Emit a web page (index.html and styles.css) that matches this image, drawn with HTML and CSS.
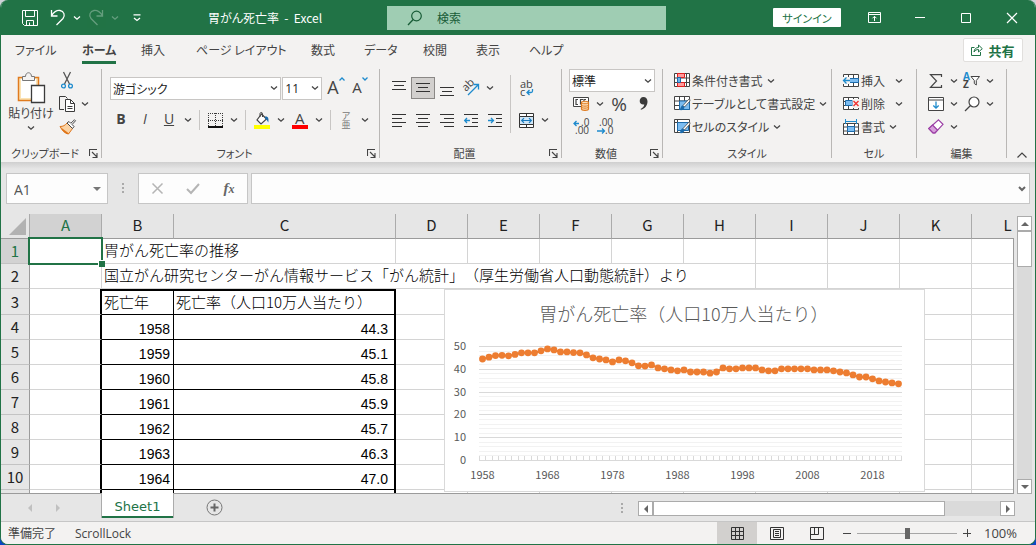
FILE: index.html
```html
<!DOCTYPE html>
<html lang="ja">
<head>
    <meta charset="UTF-8">
    <meta name="viewport" content="width=device-width, initial-scale=1.0">
    <title>胃がん死亡率 - Excel</title>
    <link rel="stylesheet" href="styles.css">
</head>
<body>
    <!-- shared icons -->
    <svg class="sprite" aria-hidden="true">
        <symbol id="chev" viewBox="0 0 8 6"><path d="M1 1.500l3 2.700 3-2.700" fill="none" stroke="currentColor" stroke-width="1.300"/></symbol>
        <symbol id="launch" viewBox="0 0 9 9"><path d="M.5 7V.5H8M3 3l4.500 4.500M8 4v4.500H3.500" fill="none" stroke="#444" stroke-width="1.100"/></symbol>
        <symbol id="tri-left" viewBox="0 0 8 8"><path d="M6 0v8L2 4z" fill="currentColor"/></symbol>
        <symbol id="tri-right" viewBox="0 0 8 8"><path d="M2 0v8l4-4z" fill="currentColor"/></symbol>
        <symbol id="tri-up" viewBox="0 0 8 8"><path d="M0 6h8L4 2z" fill="currentColor"/></symbol>
        <symbol id="tri-down" viewBox="0 0 8 8"><path d="M0 2h8L4 6z" fill="currentColor"/></symbol>
    </svg>

    <div class="window">
        <header class="titlebar">
            <div class="quick">
                <button class="tool" aria-label="上書き保存"><svg width="16" height="16" viewBox="0 0 16 16"><path d="M.5.5h15v15h-13l-2-2zM3.500.5v6h9v-6M4.500 15.500v-5h7v5M7.500 12.500v3" fill="none" stroke="#fff"/></svg></button>
                <button class="tool undo" aria-label="元に戻す"><svg width="16" height="17" viewBox="0 0 16 17"><path d="M1.500 1v6h6M1.500 6.500C4 3 7 1 10 1.500c4 .6 5.500 5 3 8L6.500 16" fill="none" stroke="#fff" stroke-width="1.300"/></svg></button>
                <button class="drop" aria-label="元に戻す一覧"><svg width="8" height="6"><use href="#chev"/></svg></button>
                <button class="tool faded" aria-label="やり直し"><svg width="16" height="17" viewBox="0 0 16 17"><path d="M14.500 1v6h-6M14.500 6.500C12 3 9 1 6 1.500 2 2.100.5 6.500 3 9.500L9.500 16" fill="none" stroke="#fff" stroke-width="1.300"/></svg></button>
                <button class="drop faded" aria-label="やり直し一覧"><svg width="8" height="6"><use href="#chev"/></svg></button>
                <button class="drop custom" aria-label="クイック アクセスのカスタマイズ"><svg width="8" height="8" viewBox="0 0 8 8"><path d="M.5.8h7M1 4l3 2.500L7 4" fill="none" stroke="#fff" stroke-width="1.300"/></svg></button>
                <span class="doc-name">胃がん死亡率&nbsp; -&nbsp; Excel</span>
            </div>
            <label class="search">
                <svg width="16" height="16" viewBox="0 0 16 16"><circle cx="9.500" cy="6" r="4.800" fill="none" stroke="#185c37" stroke-width="1.200"/><path d="M6.200 9.500L1 15" stroke="#185c37" stroke-width="1.300"/></svg>
                <input type="search" placeholder="検索" aria-label="検索">
            </label>
            <div class="win-buttons">
                <button class="signin">サインイン</button>
                <button class="win" aria-label="リボンの表示オプション"><svg width="13" height="11" viewBox="0 0 13 11"><path d="M.5.5h12v10H.5zM.5 2.500h12M6.500 9V4.500M4.500 6.300l2-2 2 2" fill="none" stroke="#fff"/></svg></button>
                <button class="win" aria-label="最小化"><svg width="10" height="10"><path d="M0 4.500h10" stroke="#fff"/></svg></button>
                <button class="win" aria-label="最大化"><svg width="10" height="10"><path d="M.5.5h9v9h-9z" fill="none" stroke="#fff"/></svg></button>
                <button class="win" aria-label="閉じる"><svg width="10" height="10"><path d="M0 0l10 10M10 0L0 10" stroke="#fff" stroke-width="1.200"/></svg></button>
            </div>
        </header>

        <nav class="tabs">
            <a href="#">ファイル</a>
            <a href="#" class="active">ホーム</a>
            <a href="#">挿入</a>
            <a href="#">ページ レイアウト</a>
            <a href="#">数式</a>
            <a href="#">データ</a>
            <a href="#">校閲</a>
            <a href="#">表示</a>
            <a href="#">ヘルプ</a>
            <button class="share"><svg width="12" height="12" viewBox="0 0 12 12"><path d="M3.500 3.500h-3v8h9V8M3 8c.3-3 2-4.500 4.500-4.500V1L11.300 4.700 7.500 8V5.500C5.500 5.500 4 6.300 3 8z" fill="none" stroke="#217346"/></svg>共有</button>
        </nav>

        <section class="ribbon">
            <div class="group clipboard">
                <div class="body">
                    <button class="paste">
                        <svg width="28" height="32" viewBox="0 0 28 32"><path d="M1.500 5.500h20v23h-20z" fill="#fbe3b5" stroke="#e07b1f" stroke-width="1.500"/><path d="M4 7h15v19H4z" fill="#fff"/><path d="M5.500 8.500v-4h3C8.500-.5 14.500-.5 14.500 4.500h3v4z" fill="#f3f2f1" stroke="#777"/><path d="M14.500 13.500h13v17h-13z" fill="#fff" stroke="#3b3b3b" stroke-width="1.300"/></svg>
                        <span>貼り付け</span>
                        <svg width="8" height="6"><use href="#chev"/></svg>
                    </button>
                    <div class="stack">
                        <div class="row"><button class="tool" aria-label="切り取り"><svg width="12" height="17" viewBox="0 0 12 17"><path d="M2.500 0l6 12M9.500 0l-6 12" fill="none" stroke="#555" stroke-width="1.300"/><circle cx="2.500" cy="14" r="1.900" fill="none" stroke="#1e8bcd" stroke-width="1.300"/><circle cx="9.500" cy="14" r="1.900" fill="none" stroke="#1e8bcd" stroke-width="1.300"/></svg></button></div>
                        <div class="row"><button class="tool" aria-label="コピー"><svg width="16" height="16" viewBox="0 0 16 16"><path d="M5 13.500H.5V.5h6l2 2" fill="none" stroke="#3b3b3b"/><path d="M6.500 3.500h5l4 4v8h-9z" fill="#fff" stroke="#3b3b3b"/><path d="M11.500 3.500v4h4M8.500 10.500h5M8.500 12.500h5" fill="none" stroke="#3b3b3b"/></svg></button><button class="drop" aria-label="コピーの種類"><svg width="8" height="6"><use href="#chev"/></svg></button></div>
                        <div class="row"><button class="tool" aria-label="書式のコピー"><svg width="17" height="16" viewBox="0 0 17 16"><path d="M8 4l5.500 5.500-4 5.500C6 14 3 11.500 1 7.500c3 0 5-1 7-3.500z" fill="#fbd3a4" stroke="#e0761a"/><path d="M2 8.500l8 6-1 .8C5 14.500 3 11.500 2 8.500z" fill="#e0761a"/><path d="M8 4l2-1.500 1.800 1.800L15.500.8l1 1-3.400 3.700 1.900 2-1.500 2z" fill="#fff" stroke="#444"/></svg></button></div>
                    </div>
                </div>
                <div class="caption"><span>クリップボード</span><button aria-label="クリップボードの詳細"><svg width="9" height="9"><use href="#launch"/></svg></button></div>
            </div>

            <div class="group font">
                <div class="body lines">
                    <div class="row">
                        <span class="combo family"><select aria-label="フォント"><option>游ゴシック</option></select><svg width="8" height="6"><use href="#chev"/></svg></span>
                        <span class="combo size"><select aria-label="フォント サイズ"><option>11</option></select><svg width="8" height="6"><use href="#chev"/></svg></span>
                        <button class="tool grow" aria-label="フォント サイズの拡大"><span>A</span><svg width="6" height="4" viewBox="0 0 6 4"><path d="M.5 3.500L3 1l2.500 2.500" fill="none" stroke="#1e8bcd" stroke-width="1.300"/></svg></button>
                        <button class="tool shrink" aria-label="フォント サイズの縮小"><span>A</span><svg width="6" height="4" viewBox="0 0 6 4"><path d="M.5.5L3 3 5.500.5" fill="none" stroke="#1e8bcd" stroke-width="1.300"/></svg></button>
                    </div>
                    <div class="row">
                        <button class="tool letter"><b>B</b></button>
                        <button class="tool letter"><i>I</i></button>
                        <button class="tool letter"><u>U</u></button>
                        <button class="drop" aria-label="下線の種類"><svg width="8" height="6"><use href="#chev"/></svg></button>
                        <span class="sep"></span>
                        <button class="tool" aria-label="罫線"><svg width="15" height="15" viewBox="0 0 15 15"><path d="M.5 0v13M14.500 0v13M7.500 0v13M0 .5h15M0 7.500h15" stroke="#3b3b3b" stroke-dasharray="1 1"/><path d="M0 14h15" stroke="#111" stroke-width="2"/></svg></button>
                        <button class="drop" aria-label="罫線の種類"><svg width="8" height="6"><use href="#chev"/></svg></button>
                        <span class="sep"></span>
                        <button class="tool" aria-label="塗りつぶしの色"><svg width="16" height="17" viewBox="0 0 16 17"><path d="M7.500 2L3 8l4 4 5.500-5z" fill="#fff" stroke="#444" stroke-width="1.200"/><path d="M6 5V1.500C6 .2 8.500.2 8.500 1.500V5" fill="none" stroke="#444"/><path d="M11 4.500c3-.5 4 1.500 3.300 6-1-1-1-3-3.300-4z" fill="#1c6bab"/><path d="M0 13h16v4H0z" fill="#ff0"/></svg></button>
                        <button class="drop" aria-label="塗りつぶしの色の一覧"><svg width="8" height="6"><use href="#chev"/></svg></button>
                        <button class="tool color" aria-label="フォントの色"><span>A</span></button>
                        <button class="drop" aria-label="フォントの色の一覧"><svg width="8" height="6"><use href="#chev"/></svg></button>
                        <span class="sep"></span>
                        <button class="tool ruby" aria-label="ふりがな"><span>ア</span><span>亜</span></button>
                        <button class="drop" aria-label="ふりがなの設定"><svg width="8" height="6"><use href="#chev"/></svg></button>
                    </div>
                </div>
                <div class="caption"><span>フォント</span><button aria-label="フォントの詳細"><svg width="9" height="9"><use href="#launch"/></svg></button></div>
            </div>

            <div class="group align">
                <div class="body">
                    <div class="lines">
                        <div class="row">
                            <button class="tool" aria-label="上揃え"><svg width="14" height="14"><path d="M0 .5h14M2 4.500h10M0 8.500h14" stroke="#333"/></svg></button>
                            <button class="tool pressed" aria-label="上下中央揃え"><svg width="14" height="10"><path d="M0 .5h14M2 4.500h10M0 8.500h14" stroke="#333"/></svg></button>
                            <button class="tool" aria-label="下揃え"><svg width="14" height="14"><path d="M0 6.500h14M2 10.500h10M0 14.500h14" stroke="#333"/></svg></button>
                            <button class="tool" aria-label="方向"><svg width="17" height="16" viewBox="0 0 17 16"><text x="0" y="9" transform="rotate(-45 5 7)" font-size="11" fill="#444">ab</text><path d="M5 15L15 5M10.500 4.500h5v5" fill="none" stroke="#1e8bcd" stroke-width="1.300"/></svg></button>
                            <button class="drop" aria-label="方向の一覧"><svg width="8" height="6"><use href="#chev"/></svg></button>
                        </div>
                        <div class="row">
                            <button class="tool" aria-label="左揃え"><svg width="14" height="13"><path d="M0 .5h14M0 4.500h10M0 8.500h14M0 12.500h10" stroke="#333"/></svg></button>
                            <button class="tool" aria-label="中央揃え"><svg width="14" height="13"><path d="M0 .5h14M2 4.500h10M0 8.500h14M2 12.500h10" stroke="#333"/></svg></button>
                            <button class="tool" aria-label="右揃え"><svg width="14" height="13"><path d="M0 .5h14M4 4.500h10M0 8.500h14M4 12.500h10" stroke="#333"/></svg></button>
                            <button class="tool" aria-label="インデントを減らす"><svg width="14" height="13"><path d="M0 .5h14M8 4.500h6M8 8.500h6M0 12.500h14" stroke="#333"/><path d="M6 6.500H1M3 4L.7 6.500 3 9" fill="none" stroke="#1e8bcd" stroke-width="1.300"/></svg></button>
                            <button class="tool" aria-label="インデントを増やす"><svg width="14" height="13"><path d="M0 .5h14M8 4.500h6M8 8.500h6M0 12.500h14" stroke="#333"/><path d="M0 6.500h5M3 4l2.500 2.500L3 9" fill="none" stroke="#1e8bcd" stroke-width="1.300"/></svg></button>
                        </div>
                    </div>
                    <span class="sep tall"></span>
                    <div class="lines">
                        <div class="row">
                            <button class="tool" aria-label="折り返して全体を表示する"><svg width="15" height="17" viewBox="0 0 15 17"><text x="1" y="8" font-size="11" fill="#444">ab</text><text x="1" y="16" font-size="11" fill="#444">c</text><path d="M13.500 9v2c0 1-.7 1.500-1.500 1.500H8M10.500 10L8 12.500l2.500 2.500" fill="none" stroke="#1e8bcd" stroke-width="1.300"/></svg></button>
                        </div>
                        <div class="row">
                            <button class="tool" aria-label="セルを結合して中央揃え"><svg width="15" height="15" viewBox="0 0 15 15"><path d="M.5.5h14v14H.5zM7.500.5v3M7.500 11.500v3" fill="#fff" stroke="#333"/><path d="M.5 3.500h14v8H.5z" fill="#cfe6f7" stroke="#333"/><path d="M2.500 7.500h10M5 5.200L2.700 7.500 5 9.800M10 5.200l2.300 2.300L10 9.800" fill="none" stroke="#1779bd" stroke-width="1.200"/></svg></button>
                            <button class="drop" aria-label="結合の一覧"><svg width="8" height="6"><use href="#chev"/></svg></button>
                        </div>
                    </div>
                </div>
                <div class="caption"><span>配置</span><button aria-label="配置の詳細"><svg width="9" height="9"><use href="#launch"/></svg></button></div>
            </div>

            <div class="group number">
                <div class="body stack">
                    <div class="row"><span class="combo format"><select aria-label="表示形式"><option>標準</option></select><svg width="8" height="6"><use href="#chev"/></svg></span></div>
                    <div class="row">
                        <button class="tool" aria-label="通貨表示形式"><svg width="17" height="15" viewBox="0 0 17 15"><path d="M.5 1.500h15v9H.5z" fill="#fff" stroke="#444"/><path d="M5 3.500H3v5h2M10 3.500H7.500v5M13 3.500h-2v3" fill="none" stroke="#444" stroke-width="1.200"/><path d="M8.500 6.500c0-1.700 7-1.700 7 0v6.500c0 1.700-7 1.700-7 0z" fill="#fde0bd" stroke="#e07b1f" stroke-width="1.200"/><path d="M8.500 6.500c0 1.700 7 1.700 7 0M8.500 9c0 1.500 7 1.500 7 0M8.500 11c0 1.500 7 1.500 7 0" fill="none" stroke="#e07b1f"/></svg></button>
                        <button class="drop" aria-label="通貨の一覧"><svg width="8" height="6"><use href="#chev"/></svg></button>
                        <button class="tool percent">%</button>
                        <button class="tool" aria-label="桁区切り"><svg width="9" height="13" viewBox="0 0 9 13"><path d="M4.300 0C7 0 8.500 2 8.500 4.500c0 4-2.500 7-6.500 8.300l-.4-.8c2.300-1.200 3.500-2.700 3.700-4.500C2.500 8 .7 6.400.7 4 .7 1.700 2.200 0 4.300 0z" fill="#3b3b3b"/></svg></button>
                    </div>
                    <div class="row">
                        <button class="tool" aria-label="小数点以下の表示桁数を増やす"><svg width="16" height="16" viewBox="0 0 16 16"><text x="8" y="7" font-size="10" fill="#444">.0</text><text x="2" y="15" font-size="10" fill="#444">.00</text><path d="M6 4.500H1M3.500 2L1 4.500 3.500 7" fill="none" stroke="#1e8bcd" stroke-width="1.300"/></svg></button>
                        <button class="tool" aria-label="小数点以下の表示桁数を減らす"><svg width="16" height="16" viewBox="0 0 16 16"><text x="2" y="7" font-size="10" fill="#444">.00</text><text x="8" y="15" font-size="10" fill="#444">.0</text><path d="M0 12h7M5 9.500L7.500 12 5 14.500" fill="none" stroke="#1e8bcd" stroke-width="1.300"/></svg></button>
                    </div>
                </div>
                <div class="caption"><span>数値</span><button aria-label="数値の詳細"><svg width="9" height="9"><use href="#launch"/></svg></button></div>
            </div>

            <div class="group style">
                <div class="body stack">
                    <button class="command"><svg width="16" height="15" viewBox="0 0 16 15"><path d="M.5.5h15v13H.5zM.5 5h15M.5 9.500h15M3.500.5v13M12.500.5v13" fill="#fff" stroke="#444"/><path d="M3.500.5h7v4h-7zM3.500 9.500h7v4h-7z" fill="#ff9a9a" stroke="#e02020"/><path d="M3.500 4.500h3v5h-3z" fill="#6bb5ee" stroke="#1c6bab"/></svg>条件付き書式<svg width="8" height="6"><use href="#chev"/></svg></button>
                    <button class="command"><svg width="16" height="15" viewBox="0 0 16 15"><path d="M.5.5h15v13H.5zM.5 5h15M.5 9.500h15M5.500.5v13M10.500.5v13" fill="#fff" stroke="#444"/><path d="M5.500 5h10v8.500h-10z" fill="#7cbcf0" stroke="#1c6bab"/><path d="M15.500 2.500L9 9.500l1.500 1.500L16 5z" fill="#fff" stroke="#444" stroke-width=".8"/><path d="M9 9.500c-2 0-2 2-3.500 4.500 3 .5 5-.5 5-3z" fill="#1c6bab"/></svg>テーブルとして書式設定<svg width="8" height="6"><use href="#chev"/></svg></button>
                    <button class="command"><svg width="16" height="15" viewBox="0 0 16 15"><path d="M.5.5h15v13H.5zM.5 3.500h15M3.500.5v13" fill="#fff" stroke="#444"/><path d="M3.500 3.500h11v8h-11z" fill="#7cbcf0" stroke="#1c6bab"/><path d="M15.500 2.500L9 9.500l1.500 1.500L16 5z" fill="#fff" stroke="#444" stroke-width=".8"/><path d="M9 9.500c-2 0-2 2-3.500 4.500 3 .5 5-.5 5-3z" fill="#1c6bab"/></svg>セルのスタイル<svg width="8" height="6"><use href="#chev"/></svg></button>
                </div>
                <div class="caption"><span>スタイル</span></div>
            </div>

            <div class="group cells">
                <div class="body stack">
                    <button class="command wide"><svg width="16" height="14" viewBox="0 0 16 14"><path d="M.5.5h15v12H.5zM5.500.5v12M10.500.5v12M.5 4.500h15M.5 8.500h15" fill="#fff" stroke="#444"/><path d="M6 4.500h9.500v4H6z" fill="#7cbcf0" stroke="#1c6bab"/><path d="M0 3h7v7H0z" fill="#f3f2f1"/><path d="M7 6.500H1M3.500 3.500l-3 3 3 3" fill="none" stroke="#1e8bcd" stroke-width="1.300"/></svg>挿入<svg width="8" height="6"><use href="#chev"/></svg></button>
                    <button class="command wide"><svg width="16" height="14" viewBox="0 0 16 14"><path d="M.5.5h15v12H.5zM5.500.5v12M10.500.5v12M.5 4.500h15M.5 8.500h15" fill="#fff" stroke="#444"/><path d="M2.500 3.500h7v5h-7z" fill="#7cbcf0" stroke="#1c6bab"/><path d="M9.500 2H16v9H9.500z" fill="#f3f2f1"/><path d="M10.500 4l5 5M15.500 4l-5 5" stroke="#e33" stroke-width="1.400"/></svg>削除<svg width="8" height="6"><use href="#chev"/></svg></button>
                    <button class="command"><svg width="16" height="16" viewBox="0 0 16 16"><path d="M.5 4.500h15v11H.5zM4.500 4.500v11M11.500 4.500v11M.5 8h15M.5 12h15" fill="#fff" stroke="#444"/><path d="M4.500 7.500h7v5h-7z" fill="#7cbcf0" stroke="#1c6bab"/><path d="M2.500 0v5M13.500 0v5M3 2.500h10" stroke="#1e8bcd"/></svg>書式<svg width="8" height="6"><use href="#chev"/></svg></button>
                </div>
                <div class="caption"><span>セル</span></div>
            </div>

            <div class="group edit">
                <div class="body stack">
                    <div class="row">
                        <button class="tool" aria-label="合計"><svg width="14" height="14" viewBox="0 0 14 14"><path d="M12.500 3V.7H1.500L7.500 7l-6 6.300h11V11" fill="none" stroke="#444" stroke-width="1.200"/></svg></button>
                        <button class="drop" aria-label="合計の一覧"><svg width="8" height="6"><use href="#chev"/></svg></button>
                        <button class="tool" aria-label="並べ替えとフィルター"><svg width="18" height="17" viewBox="0 0 18 17"><text x="0" y="8" font-size="10" font-weight="bold" fill="#1e8bcd">A</text><text x="0" y="16" font-size="10" font-weight="bold" fill="#444">Z</text><path d="M8 4.500h8.500l-3.200 4v4.500l-2-1.500V8.500z" fill="#fff" stroke="#444"/></svg></button>
                        <button class="drop" aria-label="フィルターの一覧"><svg width="8" height="6"><use href="#chev"/></svg></button>
                    </div>
                    <div class="row">
                        <button class="tool" aria-label="フィル"><svg width="16" height="14" viewBox="0 0 16 14"><path d="M.5.5h15v13H.5zM.5 3h15" fill="#fff" stroke="#444"/><path d="M8 4.500V11M5.300 8.500L8 11.200l2.700-2.700" fill="none" stroke="#1e8bcd" stroke-width="1.300"/></svg></button>
                        <button class="drop" aria-label="フィルの一覧"><svg width="8" height="6"><use href="#chev"/></svg></button>
                        <button class="tool" aria-label="検索と選択"><svg width="16" height="16" viewBox="0 0 16 16"><circle cx="10" cy="6" r="5" fill="#fff" stroke="#444" stroke-width="1.200"/><path d="M6.500 9.500L1 15" stroke="#444" stroke-width="1.300"/></svg></button>
                        <button class="drop" aria-label="検索の一覧"><svg width="8" height="6"><use href="#chev"/></svg></button>
                    </div>
                    <div class="row">
                        <button class="tool" aria-label="クリア"><svg width="16" height="15" viewBox="0 0 16 15"><path d="M10.500.8l4.500 4.500-8 8.500H5L.8 9.500z" fill="#fff" stroke="#9b3fa5" stroke-width="1.200"/><path d="M4.500 6L9.500 11 7 13.800H5L.8 9.500z" fill="#d79fdc" stroke="#9b3fa5" stroke-width="1.200"/></svg></button>
                        <button class="drop" aria-label="クリアの一覧"><svg width="8" height="6"><use href="#chev"/></svg></button>
                    </div>
                </div>
                <div class="caption"><span>編集</span></div>
            </div>
            <button class="collapse" aria-label="リボンを折りたたむ"><svg width="10" height="6"><path d="M.5 5.500L5 1l4.500 4.500" fill="none" stroke="#444" stroke-width="1.200"/></svg></button>
        </section>

        <div class="formula-bar">
            <div class="box name-box"><input type="text" value="A1" aria-label="名前ボックス"><svg width="8" height="8"><use href="#tri-down"/></svg></div>
            <span class="dots"></span>
            <div class="box fx-box">
                <button aria-label="キャンセル"><svg width="11" height="11"><path d="M.5.5l10 10M10.500.5l-10 10" stroke="#b5b5b5" stroke-width="1.500"/></svg></button>
                <button aria-label="入力"><svg width="14" height="11"><path d="M1 6l4 4 8-9" fill="none" stroke="#b5b5b5" stroke-width="2"/></svg></button>
                <button class="fx"><i>f<small>x</small></i></button>
            </div>
            <div class="box formula"><input type="text" aria-label="数式バー"><svg width="8" height="6" viewBox="0 0 8 6"><path d="M1 1l3 3 3-3" fill="none" stroke="#666" stroke-width="2"/></svg></div>
        </div>

        <main class="sheet">
            <div class="grid" id="grid">
                <table>
                    <colgroup id="cols"></colgroup>
                    <thead><tr id="letters"></tr></thead>
                    <tbody id="rows"></tbody>
                </table>
                <svg class="chart" id="chart" width="481" height="203" role="img" aria-label="胃がん死亡率（人口10万人当たり）"></svg>
            </div>
            <div class="vscroll">
                <button aria-label="上へ"><svg width="8" height="8"><use href="#tri-up"/></svg></button>
                <span class="thumb"></span>
                <button aria-label="下へ"><svg width="8" height="8"><use href="#tri-down"/></svg></button>
            </div>
        </main>

        <div class="sheet-bar">
            <div class="sheet-nav">
                <button aria-label="前のシート"><svg width="8" height="8"><use href="#tri-left"/></svg></button>
                <button aria-label="次のシート"><svg width="8" height="8"><use href="#tri-right"/></svg></button>
            </div>
            <button class="sheet-tab">Sheet1</button>
            <button class="add" aria-label="新しいシート"><svg width="17" height="17"><circle cx="8.500" cy="8.500" r="7.500" fill="none" stroke="#777"/><path d="M8.500 4.500v8M4.500 8.500h8" stroke="#666" stroke-width="2"/></svg></button>
            <span class="dots"></span>
            <div class="hscroll">
                <button aria-label="左へ"><svg width="8" height="8"><use href="#tri-left"/></svg></button>
                <span class="thumb"></span>
                <button aria-label="右へ"><svg width="8" height="8"><use href="#tri-right"/></svg></button>
            </div>
        </div>

        <footer class="status">
            <span>準備完了</span>
            <span>ScrollLock</span>
            <div class="views">
                <button class="on" aria-label="標準"><svg width="13" height="13"><path d="M.5.5h12v12H.5zM4.500.5v12M8.500.5v12M.5 4.500h12M.5 8.500h12" fill="none" stroke="#333"/></svg></button>
                <button aria-label="ページ レイアウト"><svg width="14" height="13"><path d="M.5.5h13v12H.5zM3.500 2.500h7v8h-7zM5 4.500h4M5 6.500h4M5 8.500h4" fill="none" stroke="#333"/></svg></button>
                <button aria-label="改ページ プレビュー"><svg width="14" height="13"><path d="M.5.5h13v12H.5zM4.500.5v7M8.500.5v7M.5 7.500h8" fill="none" stroke="#333"/></svg></button>
            </div>
            <button class="zoom-step" aria-label="縮小"><svg width="8" height="8"><path d="M0 4.500h8" stroke="#444"/></svg></button>
            <input type="range" min="0" max="100" value="50" aria-label="ズーム">
            <button class="zoom-step" aria-label="拡大"><svg width="8" height="8"><path d="M0 4.500h8M4.500 0v8" stroke="#444"/></svg></button>
            <span class="zoom">100%</span>
        </footer>
    </div>
    <script src="script.js"></script>
</body>
</html>
```
FILE: styles.css
```css
* {
    box-sizing: border-box;
}
body {
    margin: 0;
    font-family: "Noto Sans CJK JP", sans-serif;
    font-size: 13px;
    color: #444;
    background: linear-gradient(#cfd3d8 50%, #0b46c4 50%);
}
button, input, select {
    font: inherit;
    color: inherit;
    border: 0;
    margin: 0;
    padding: 0;
    background: none;
    min-width: 0;
}
button {
    display: flex;
    align-items: center;
    justify-content: center;
    flex-shrink: 0;
}
svg {
    flex-shrink: 0;
    overflow: visible;
}
.sprite {
    display: none;
}
.window {
    display: flex;
    flex-direction: column;
    height: 100vh;
    border: 1px solid #217346;
    border-top: 0;
    border-radius: 8px;
    overflow: hidden;
    background: #e6e6e6;
    font-feature-settings: "palt";
}

/* title bar */
.titlebar {
    display: grid;
    grid-template-columns: 386px minmax(120px, 279px) 1fr;
    align-items: center;
    flex-shrink: 0;
    height: 35px;
    background: #217346;
    color: #fff;
}
.quick {
    display: flex;
    align-items: center;
    padding-left: 17px;
    font-size: 12px;
}
.undo {
    margin-left: 4px;
}
.faded {
    opacity: 0.3;
}
.custom {
    margin-left: 8px;
}
.doc-name {
    margin-left: 64px;
    white-space: nowrap;
}
.search {
    display: flex;
    align-items: center;
    gap: 14px;
    height: 24px;
    padding-left: 20px;
    background: #9fcdb3;
    font-size: 12px;
}
.search input {
    flex: 1;
    outline: none;
}
.search input::placeholder {
    color: #185c37;
    opacity: 1;
}
.win-buttons {
    display: flex;
    align-items: center;
    justify-content: flex-end;
}
.signin {
    width: 68px;
    height: 19px;
    margin-right: 10px;
    background: #fff;
    color: #217346;
    border-radius: 1px;
    font-size: 11px;
}
.win {
    width: 46px;
    height: 35px;
}

/* ribbon tabs */
.tabs {
    display: grid;
    grid-template-columns: 67px 59px 55px 115px 53px 59px 53px 53px 1fr auto;
    align-items: center;
    flex-shrink: 0;
    height: 30px;
    padding: 0 12px 0 14px;
    background: #f3f2f1;
}
.tabs a {
    justify-self: start;
    line-height: 22px;
    margin-top: 2px;
    border-bottom: 3px solid transparent;
    color: #444;
    text-decoration: none;
    white-space: nowrap;
    font-size: 12px;
}
.tabs .active {
    font-weight: bold;
    border-color: #217346;
}
.share {
    gap: 5px;
    width: 60px;
    height: 24px;
    background: #fff;
    border: 1px solid #e1dfdd;
    border-radius: 2px;
    color: #217346;
    font-weight: bold;
}

/* ribbon */
.ribbon {
    display: flex;
    flex-shrink: 0;
    height: 97px;
    padding-top: 4px;
    background: #f3f2f1;
}
.group {
    display: flex;
    flex-direction: column;
    flex-shrink: 0;
    height: 89px;
    border-right: 1px solid #b9b7b5;
}
.clipboard {
    width: 101px;
}
.font {
    width: 278px;
}
.align {
    width: 182px;
}
.number {
    width: 101px;
}
.style {
    width: 169px;
}
.cells {
    width: 85px;
}
.edit {
    width: 90px;
}
.body {
    display: flex;
    flex-shrink: 0;
    height: 76px;
    padding: 0 7px;
}
.row {
    display: flex;
    align-items: center;
}
.stack {
    display: flex;
    flex-direction: column;
}
.stack .row, .command {
    height: 23px;
}
.lines {
    display: flex;
    flex-direction: column;
    padding-top: 3px;
}
.body.lines {
    padding-top: 3px;
}
.lines .row {
    height: 32px;
}
.tool {
    width: 24px;
    height: 22px;
}
.drop {
    width: 14px;
    height: 22px;
}
.sep {
    width: 1px;
    height: 20px;
    margin: 0 4px;
    background: #c8c6c4;
}
.sep.tall {
    height: 58px;
    margin: 6px 3px 0 3px;
}
.caption {
    display: flex;
    align-items: center;
    flex-shrink: 0;
    height: 16px;
    font-size: 11px;
    line-height: 16px;
}
.caption span {
    flex: 1;
    text-align: center;
    white-space: nowrap;
}
.caption button {
    margin-right: 3px;
}
.paste {
    flex-direction: column;
    justify-content: flex-start;
    width: 48px;
    padding-top: 3px;
    font-size: 12px;
    line-height: 18px;
    white-space: nowrap;
}
.clipboard .body {
    padding: 0 0 0 6px;
}
.clipboard .drop {
    width: 12px;
}
.paste svg + span {
    margin-bottom: 3px;
}
.combo {
    position: relative;
    display: flex;
    align-items: center;
    height: 23px;
    background: #fff;
    border: 1px solid #c8c6c4;
    font-size: 12px;
}
.combo select {
    width: 100%;
    height: 21px;
    padding-left: 2px;
    appearance: none;
    color: #222;
}
.combo svg {
    position: absolute;
    right: 2px;
    pointer-events: none;
}
.family {
    width: 173px;
    margin: 0 1px;
}
.size {
    width: 40px;
    margin-right: 2px;
    font-family: "Open Sans", sans-serif;
}
.format {
    width: 86px;
}
.grow, .shrink {
    align-items: flex-start;
    font-family: "Open Sans", sans-serif;
    line-height: 20px;
}
.grow {
    font-size: 18px;
}
.shrink {
    font-size: 15px;
}
.letter {
    padding-bottom: 3px;
    font-family: "Open Sans", sans-serif;
    font-size: 14px;
}
.color span {
    width: 16px;
    height: 17px;
    border-bottom: 4px solid #f00;
    font-family: "Open Sans", sans-serif;
    font-size: 15px;
    line-height: 12px;
}
.ruby {
    flex-direction: column;
    font-size: 9px;
    line-height: 9px;
    color: #777;
}
.pressed {
    background: #d2d0ce;
    border: 1px solid #8a8886;
}
.align svg text, .number svg text, .edit svg text {
    font-family: "Open Sans", sans-serif;
}
.percent {
    font-family: "Open Sans", sans-serif;
    font-size: 19px;
}
.style .body {
    padding: 0 11px;
}
.command {
    justify-content: flex-start;
    gap: 2px;
    white-space: nowrap;
    font-size: 12px;
}
.command svg:last-child {
    margin-left: 2px;
}
.cells .body {
    padding: 0 11px;
}
.command.wide svg:last-child {
    margin-left: 8px;
}
.edit .drop {
    width: 12px;
}
.collapse {
    align-self: flex-end;
    width: 30px;
    height: 14px;
}

/* formula bar */
.formula-bar {
    display: flex;
    flex-shrink: 0;
    height: 52px;
    padding: 11px 5px 0;
    background: linear-gradient(#cfcfcf, #e6e6e6 7px);
}
.box {
    display: flex;
    align-items: center;
    height: 31px;
    background: #fdfdfd;
    border: 1px solid #c6c6c6;
    color: #777;
}
.box input {
    flex: 1;
    outline: none;
    padding: 2px 0 0 7px;
    color: #555;
    font-family: "Open Sans", sans-serif;
    font-size: 14px;
}
.name-box {
    width: 102px;
    padding-right: 6px;
}
.dots {
    width: 2px;
    height: 10px;
    background: repeating-linear-gradient(#aaa 0 2px, transparent 2px 4px);
}
.formula-bar .dots {
    margin: 10px 14px;
}
.fx-box {
    width: 110px;
    margin-right: 3px;
}
.fx-box button {
    width: 36px;
}
.fx {
    font-family: "Liberation Serif", serif;
    font-size: 15px;
    font-weight: bold;
    color: #666;
}
.fx small {
    font-size: 12px;
}
.formula {
    flex: 1;
    padding-right: 3px;
}

/* sheet */
.sheet {
    display: flex;
    flex: 1;
    min-height: 0;
}
.grid {
    position: relative;
    flex: 1;
    overflow: hidden;
    border-bottom: 1px solid #9b9b9b;
}
.grid::after {
    content: "";
    position: absolute;
    top: 24px;
    right: 0;
    bottom: 0;
    width: 1px;
    background: #9b9b9b;
}
table {
    table-layout: fixed;
    border-collapse: separate;
    border-spacing: 0;
    width: 100px;
    background: #fff;
    font-size: 15px;
    font-weight: 300;
    font-feature-settings: normal;
    color: #000;
}
col {
    width: 72px;
}
.col-head {
    width: 29px;
}
.col-rate {
    width: 222px;
}
th, td {
    height: 25px;
    padding: 0 2px;
    border-right: 1px solid #d4d4d4;
    border-bottom: 1px solid #d4d4d4;
    line-height: 20px;
    white-space: nowrap;
    text-align: left;
}
td {
    padding-bottom: 2px;
}
th {
    padding: 0;
    background: #e6e6e6;
    color: #222;
    font-weight: normal;
    text-align: center;
}
thead th {
    padding-bottom: 2px;
    border-color: #ababab;
    border-bottom-color: #9b9b9b;
}
tbody th {
    border-bottom-color: #c3c3c3;
    border-right-color: #9b9b9b;
}
th.current {
    background: #d2d2d2;
    color: #217346;
}
.corner svg {
    display: block;
    margin: 3px 0 0 8px;
}
.tall td, .tall th {
    height: 26px;
}
.tall .entry {
    border-top: 2px solid #000;
}
td.cursor {
    position: relative;
}
.cursor::before {
    content: "";
    position: absolute;
    z-index: 1;
    inset: -2px;
    border: 2px solid #217346;
}
.cursor::after {
    content: "";
    position: absolute;
    z-index: 1;
    right: -4px;
    bottom: -4px;
    width: 6px;
    height: 6px;
    background: #217346;
    border: solid #fff;
    border-width: 1px 0 0 1px;
}
.table-left {
    border-right: 2px solid #000;
}
.entry {
    border-color: #000;
}
.rate {
    border-right: 2px solid #000;
}
.num {
    padding: 3px 3px 0;
    text-align: right;
    font-family: "Liberation Sans", sans-serif;
    font-size: 14px;
    font-weight: normal;
}
.rate.num {
    padding-right: 6px;
}
td[colspan] {
    text-spacing-trim: space-all;
}
.chart {
    position: absolute;
    left: 443px;
    top: 75px;
    background: #fff;
    font-feature-settings: normal;
}
.chart .frame {
    fill: #fff;
    stroke: #d9d9d9;
}
.chart .title {
    font-size: 18px;
    font-weight: 300;
    fill: #595959;
    text-anchor: middle;
    text-spacing-trim: space-all;
}
.chart .major {
    stroke: #d9d9d9;
}
.chart .minor {
    stroke: #f2f2f2;
}
.chart .label {
    font-size: 11px;
    fill: #595959;
}
.chart .x {
    text-anchor: middle;
}
.chart .y {
    text-anchor: end;
}
.chart .series {
    fill: none;
    stroke: #ed7d31;
    stroke-width: 2;
}
.chart circle {
    fill: #ed7d31;
}

/* scroll bars */
.vscroll {
    display: flex;
    flex-direction: column;
    width: 15px;
    margin: 2px 3px 0 3px;
    background: #dadada;
}
.vscroll button, .hscroll button {
    width: 15px;
    height: 15px;
    background: #fff;
    border: 1px solid #ababab;
    color: #666;
}
.vscroll button:last-child, .hscroll button:last-child {
    margin-top: auto;
    margin-left: auto;
}
.thumb {
    background: #fff;
    border: 1px solid #ababab;
}
.vscroll .thumb {
    height: 36px;
}
.hscroll {
    display: flex;
    width: 377px;
    height: 15px;
    margin: 2px 20px 0 15px;
    background: #dadada;
}
.hscroll .thumb {
    width: 292px;
}

/* sheet tabs */
.sheet-bar {
    display: flex;
    align-items: center;
    flex-shrink: 0;
    height: 27px;
}
.sheet-nav {
    display: flex;
    gap: 20px;
    width: 100px;
    padding-left: 25px;
    color: #c0c0c0;
}
.sheet-tab {
    align-self: flex-start;
    width: 73px;
    height: 25px;
    margin-top: -1px;
    padding-top: 2px;
    background: #fff;
    border: 1px solid #ababab;
    border-width: 0 1px;
    box-shadow: inset 0 -2px #217346;
    color: #217346;
    font-family: "DejaVu Sans", sans-serif;
    z-index: 1;
}
.add {
    margin-left: 32px;
}
.sheet-bar .dots {
    margin-left: auto;
}

/* status bar */
.status {
    display: flex;
    align-items: center;
    flex-shrink: 0;
    height: 23px;
    padding: 0 18px 0 7px;
    gap: 19px;
    border-top: 1px solid #c6c6c6;
    background: #f3f2f1;
    font-family: "Open Sans", "Noto Sans CJK JP", sans-serif;
    font-size: 12px;
}
.views {
    display: flex;
    margin-left: auto;
}
.views button {
    width: 40px;
    height: 22px;
}
.views .on {
    background: #d2d0ce;
}
.zoom-step {
    width: 9px;
    margin: 0 -13px 0 -14px;
}
.status input {
    width: 100px;
    height: 12px;
    appearance: none;
    background: linear-gradient(#a6a6a6, #a6a6a6) center / 100% 1px no-repeat;
}
.status input::-webkit-slider-thumb {
    appearance: none;
    width: 5px;
    height: 11px;
    background: #666;
}
.zoom {
    width: 40px;
    text-align: right;
    font-size: 13px;
}
```
FILE: script.js
```js
// rate per 100,000 people, 1958 to 2022
const rates = [
    44.3, 45.1, 45.8, 45.9, 45.7, 46.3, 47.0, 47.0, 47.0, 47.9,
    48.7, 48.3, 47.4, 47.4, 47.1, 47.0, 46.1, 44.8, 44.3, 43.9,
    43.0, 43.9, 43.5, 42.6, 41.3, 41.2, 41.7, 40.4, 40.0, 39.5,
    39.1, 39.5, 38.6, 38.6, 38.6, 38.1, 38.6, 40.4, 40.0, 40.0,
    40.4, 40.4, 40.4, 39.5, 39.1, 39.1, 40.0, 40.0, 40.0, 40.0,
    40.0, 39.5, 39.5, 39.5, 39.1, 38.6, 38.2, 37.3, 36.4, 36.4,
    35.6, 34.7, 34.2, 33.8, 33.4
];
const firstYear = 1958;
const alphabet = "ABCDEFGHIJKLMNOPQRSTUVWXYZ";
const grid = document.getElementById("grid");

function emptyCells(count) {
    return "<td></td>".repeat(count);
}

// draw only the columns and rows that fit in the window
function drawSheet() {
    const colCount = Math.min(26, Math.max(8, Math.ceil((grid.clientWidth - 179) / 72)));
    const rowCount = Math.max(3, Math.ceil((grid.clientHeight - 25) / 25));

    let cols = '<col class="col-head">';
    let heads = '<th class="corner"><svg width="17" height="17"><path d="M17 0v17H0z" fill="#b2b2b2"/></svg></th>';
    alphabet.slice(0, colCount).split("").forEach((letter) => {
        cols += letter === "C" ? '<col class="col-rate">' : "<col>";
        heads += `<th scope="col"${letter === "A" ? ' class="current"' : ""}>${letter}</th>`;
    });
    document.getElementById("cols").innerHTML = cols;
    document.getElementById("letters").innerHTML = heads;

    let rows = "";
    for (let n = 1; n <= rowCount; n++) {
        const rate = rates[n - 4];
        let cells;
        if (n === 1) {
            cells = '<td class="cursor"></td><td colspan="2">胃がん死亡率の推移</td>' + emptyCells(colCount - 3);
        } else if (n === 2) {
            cells = '<td></td><td colspan="7">国立がん研究センターがん情報サービス「がん統計」（厚生労働省人口動態統計）より</td>' + emptyCells(colCount - 8);
        } else if (n === 3) {
            cells = '<td class="table-left"></td><td class="entry">死亡年</td><td class="entry rate">死亡率（人口10万人当たり）</td>' + emptyCells(colCount - 3);
        } else if (rate) {
            cells = `<td class="table-left"></td><td class="entry num">${firstYear + n - 4}</td><td class="entry rate num">${rate.toFixed(1)}</td>` + emptyCells(colCount - 3);
        } else {
            cells = emptyCells(colCount);
        }
        rows += `<tr${n === 3 ? ' class="tall"' : ""}><th scope="row"${n === 1 ? ' class="current"' : ""}>${n}</th>${cells}</tr>`;
    }
    document.getElementById("rows").innerHTML = rows;
}

function drawChart() {
    const left = 35, right = 458, bottom = 171, unit = 2.28, step = 6.5;
    const px = (i) => left + 3.5 + i * step;
    const py = (v) => bottom - v * unit;

    let chart = '<rect class="frame" x="0.5" y="0.5" width="480" height="202"/>';
    chart += '<text class="title" x="240" y="32">胃がん死亡率（人口10万人当たり）</text>';
    for (let v = 0; v <= 50; v += 2) {
        const y = Math.round(py(v)) + 0.5;
        chart += `<path class="${v % 10 ? "minor" : "major"}" d="M${left} ${y}H${right}"/>`;
    }
    for (let v = 0; v <= 50; v += 10) {
        chart += `<text class="label y" x="22" y="${Math.round(py(v)) + 4}">${v}</text>`;
    }
    for (let i = 0; i <= rates.length; i++) {
        const x = Math.floor(left + i * step) + 0.5;
        chart += `<path class="major" d="M${x} ${bottom}v-4"/>`;
    }
    chart += `<polyline class="series" points="${rates.map((v, i) => px(i) + "," + py(v)).join(" ")}"/>`;
    rates.forEach((v, i) => {
        chart += `<circle cx="${px(i)}" cy="${py(v)}" r="3.4"/>`;
        if (i % 10 === 0) {
            chart += `<text class="label x" x="${px(i)}" y="190">${firstYear + i}</text>`;
        }
    });
    document.getElementById("chart").innerHTML = chart;
}

drawSheet();
drawChart();
window.addEventListener("resize", drawSheet);
```
